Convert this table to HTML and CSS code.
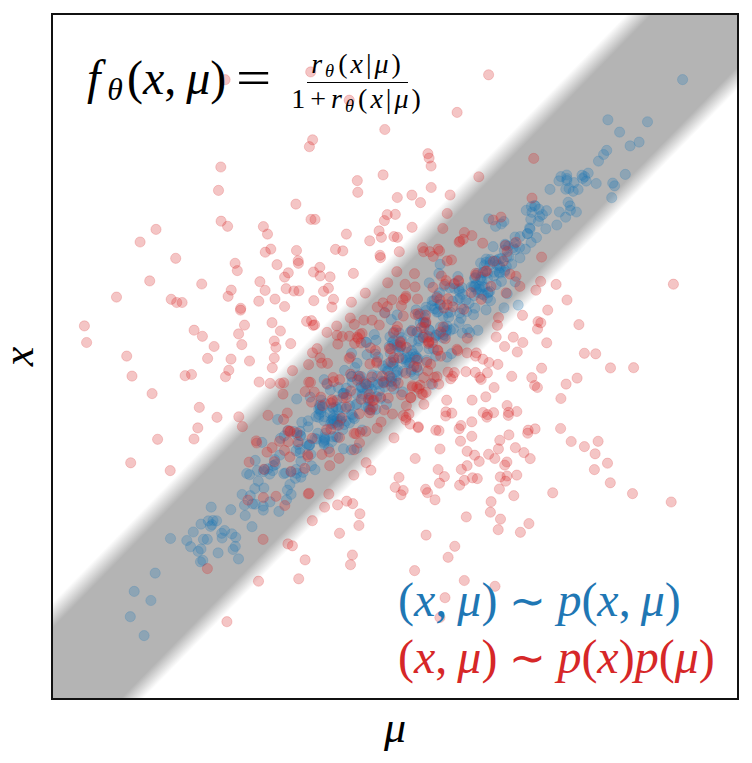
FILE: index.html
```html
<!DOCTYPE html>
<html>
<head>
<meta charset="utf-8">
<link rel="stylesheet" href="styles.css">
</head>
<body>
<div class="figure">
  <div class="ylabel">
    <svg class="ylabel-svg" width="51" height="687" viewBox="0 0 51 687">
      <text class="ylabel-text" transform="translate(32.5 343.5) rotate(-90)" text-anchor="middle">x</text>
    </svg>
  </div>
  <div class="plot">
    <svg class="points" width="684" height="683" viewBox="0 0 684 683"></svg>
    <div class="formula"><i class="f">f</i><span class="sub">θ</span>(<i>x</i><span class="comma">,</span><i>μ</i>)<span class="eq"><span class="eq-glyph">=</span></span><span class="frac"><span class="num"><i>r</i><span class="sub">θ</span>(<i>x</i>|<i>μ</i>)</span><span class="den">1<span class="plus">+</span><i>r</i><span class="sub">θ</span>(<i>x</i>|<i>μ</i>)</span></span></div>
    <div class="legend">
      <div class="leg blue">(<i>x</i><span class="comma">,</span><i>μ</i>)<span class="sim">∼</span><i>p</i>(<i>x</i><span class="comma">,</span><i>μ</i>)</div>
      <div class="leg red">(<i>x</i><span class="comma">,</span><i>μ</i>)<span class="sim">∼</span><i>p</i>(<i>x</i>)<i>p</i>(<i>μ</i>)</div>
    </div>
  </div>
  <div class="xlabel"><i>μ</i></div>
</div>
<script src="script.js"></script>
</body>
</html>
```

FILE: styles.css
```css
html, body {
  margin: 0;
  padding: 0;
  background: #fff;
}

.figure {
  width: 752px;
  height: 763px;
  display: grid;
  grid-template-columns: 51px 688px;
  grid-template-rows: 13px 687px 63px;
  font-family: "Liberation Serif", "Times New Roman", serif;
  color: #000;
}

.ylabel {
  grid-column: 1;
  grid-row: 2;
}

.ylabel-svg {
  display: block;
}

.ylabel-text {
  font-family: "Liberation Serif", "Times New Roman", serif;
  font-style: italic;
  font-size: 44px;
  fill: #000;
}

.plot {
  grid-column: 2;
  grid-row: 2;
  border: 2px solid #111;
  position: relative;
  overflow: hidden;
  background: linear-gradient(134.3deg, #fff 0, #fff 410px, #b4b4b4 428px, #b4b4b4 526px, #fff 542px, #fff 100%);
}

.points {
  display: block;
}

.pt-b {
  fill: #1f77b4;
  fill-opacity: 0.26;
  stroke: #1f77b4;
  stroke-opacity: 0.2;
  stroke-width: 1;
}

.pt-r {
  fill: #d62728;
  fill-opacity: 0.27;
  stroke: #d62728;
  stroke-opacity: 0.2;
  stroke-width: 1;
}

.formula {
  position: absolute;
  left: 34px;
  top: 39px;
  font-size: 48px;
  line-height: 1;
  white-space: nowrap;
  display: flex;
  align-items: baseline;
}

.formula i, .legend i, .xlabel i {
  font-style: italic;
}

.f {
  margin-right: 7px;
}

.sub {
  font-size: 0.66em;
  font-style: italic;
  position: relative;
  top: 0.2em;
  margin-right: 4px;
}

.comma {
  margin-right: 10px;
}

.eq {
  display: inline-block;
  width: 63px;
  padding-left: 10px;
  box-sizing: border-box;
}

.eq-glyph {
  display: inline-block;
  transform: scaleX(1.3);
  transform-origin: left center;
}

.frac {
  display: inline-flex;
  flex-direction: column;
  align-items: center;
  font-size: 28px;
  line-height: 1;
  letter-spacing: 3px;
  position: relative;
  top: -21px;
}

.frac .sub {
  margin-right: 1px;
  top: 0.22em;
}

.num {
  padding: 0 4px 4px;
  border-bottom: 1.5px solid #000;
}

.den {
  padding: 2px 2px 0;
}

.plus {
  margin: 0 2px;
}

.legend {
  position: absolute;
  left: 345px;
  top: 557px;
  font-size: 48px;
  line-height: 55px;
  white-space: nowrap;
}

.leg.blue {
  color: #1f77b4;
}

.leg.red {
  color: #d62728;
}

.sim {
  display: inline-block;
  width: 60px;
  text-align: center;
  font-style: normal;
  font-size: 44px;
}

.xlabel {
  grid-column: 2;
  grid-row: 3;
  text-align: center;
  font-size: 44px;
  line-height: 1;
  padding-top: 6px;
}
```

FILE: script.js
```js
(function () {
  function mulberry32(a) {
    return function () {
      a |= 0; a = a + 0x6D2B79F5 | 0;
      var t = Math.imul(a ^ a >>> 15, 1 | a);
      t = t + Math.imul(t ^ t >>> 7, 61 | t) ^ t;
      return ((t ^ t >>> 14) >>> 0) / 4294967296;
    };
  }
  var rnd = mulberry32(20240611);
  function gauss() {
    var u = 0;
    while (u === 0) u = rnd();
    var v = rnd();
    return Math.sqrt(-2 * Math.log(u)) * Math.cos(2 * Math.PI * v);
  }
  var svg = document.querySelector('.points');
  var html = '', i, m, x, y;
  for (i = 0; i < 500; i++) {
    m = gauss();
    x = 337 + 100 * m;
    y = 350 - 94 * m + 20 * gauss();
    html += '<circle class="pt-b" cx="' + x.toFixed(1) + '" cy="' + y.toFixed(1) + '" r="5.1"/>';
  }
  for (i = 0; i < 540; i++) {
    x = 337 + 98 * gauss();
    y = 345 + 92 * gauss();
    html += '<circle class="pt-r" cx="' + x.toFixed(1) + '" cy="' + y.toFixed(1) + '" r="5.1"/>';
  }
  svg.innerHTML = html;
})();
```
